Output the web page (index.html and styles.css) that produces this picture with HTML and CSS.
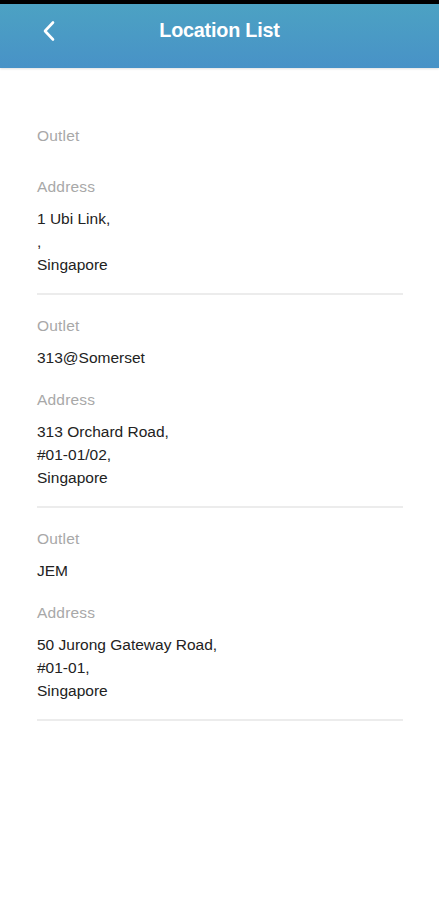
FILE: index.html
```html
<!DOCTYPE html>
<html>
<head>
<meta charset="utf-8">
<link rel="stylesheet" href="styles.css">
</head>
<body>
<div class="status"></div>
<header class="header">
  <span class="back">
    <svg width="16" height="22" viewBox="0 0 16 22"><path d="M12 2.5 L4 11 L12 19.5" fill="none" stroke="#fff" stroke-width="2.6" stroke-linecap="round" stroke-linejoin="round"/></svg>
  </span>
  <h1 class="title">Location List</h1>
</header>
<main class="list">
  <section class="item">
    <div class="label">Outlet</div>
    <div class="value"></div>
    <div class="label label-gap">Address</div>
    <div class="address">1 Ubi Link,<br>,<br>Singapore</div>
  </section>
  <section class="item">
    <div class="label">Outlet</div>
    <div class="value">313@Somerset</div>
    <div class="label label-gap">Address</div>
    <div class="address">313 Orchard Road,<br>#01-01/02,<br>Singapore</div>
  </section>
  <section class="item">
    <div class="label">Outlet</div>
    <div class="value">JEM</div>
    <div class="label label-gap">Address</div>
    <div class="address">50 Jurong Gateway Road,<br>#01-01,<br>Singapore</div>
  </section>
</main>
</body>
</html>
```

FILE: styles.css
```css
* { box-sizing: border-box; }
html, body { margin: 0; padding: 0; background: #fff; }
body { font-family: "Liberation Sans", Arial, sans-serif; color: #222; width: 439px; }
.status { height: 4px; background: #000; }
.header {
  position: relative;
  height: 64px;
  background: linear-gradient(180deg, #4ca2c3 0%, #4892c7 100%);
  box-shadow: 0 1px 2px rgba(0,0,0,0.12);
  display: flex;
  justify-content: center;
  align-items: flex-start;
  padding-top: 14px;
}
.back { position: absolute; left: 41px; top: 16px; display: block; line-height: 0; }
.title { margin: 0; color: #fff; font-size: 19.8px; font-weight: bold; line-height: 24px; letter-spacing: -0.2px; }
.list { padding: 37px 36px 0 37px; }
.item { display: flex; flex-direction: column; padding: 21px 0 17px; border-bottom: 2px solid #ececec; }
.label { color: #a8a8a8; font-size: 15.5px; line-height: 20px; letter-spacing: 0.2px; }
.value { font-size: 15.5px; line-height: 23px; margin-top: 10px; color: #222; }
.value:empty { height: 0; }
.label-gap { margin-top: 21px; }
.address { margin-top: 10px; font-size: 15.5px; line-height: 23px; color: #222; }
```
